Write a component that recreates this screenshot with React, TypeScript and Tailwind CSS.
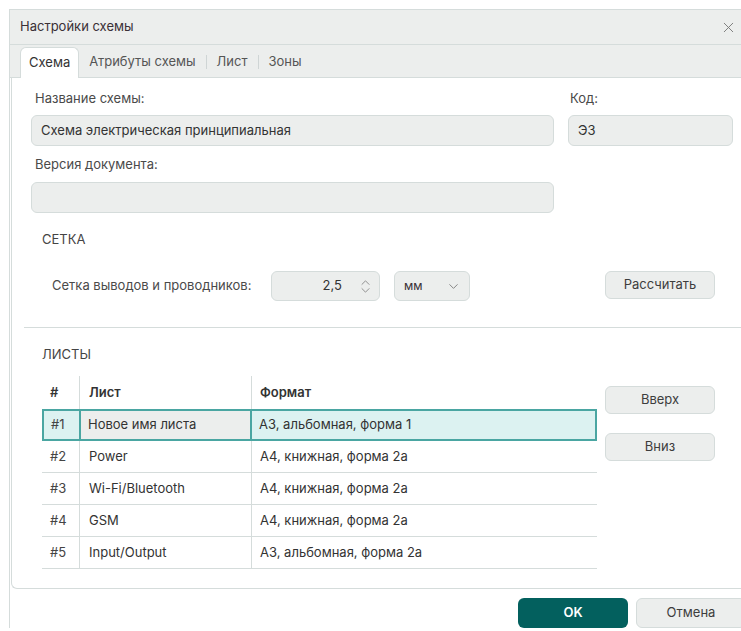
import React from 'react';
import { X, ChevronsUpDown, ChevronDown } from 'lucide-react';

type SheetRow = {
  num: string;
  name: string;
  format: string;
};

const sheets: SheetRow[] = [
  { num: '#1', name: 'Новое имя листа', format: 'А3, альбомная, форма 1' },
  { num: '#2', name: 'Power', format: 'А4, книжная, форма 2а' },
  { num: '#3', name: 'Wi-Fi/Bluetooth', format: 'А4, книжная, форма 2а' },
  { num: '#4', name: 'GSM', format: 'А4, книжная, форма 2а' },
  { num: '#5', name: 'Input/Output', format: 'А3, альбомная, форма 2а' },
];

function GrayButton({ children, className = '' }: { children: React.ReactNode; className?: string }) {
  return (
    <button
      className={`h-[28px] w-[110px] rounded-[6px] border border-[#d5dcdb] bg-[#eceeed] text-[13px] text-[#3d3d3d] ${className}`}
    >
      {children}
    </button>
  );
}

export default function App() {
  return (
    <div className="h-[631px] w-[741px] overflow-hidden bg-white font-['Inter','Noto_Sans',sans-serif] text-[13px] text-[#333]">
      <div className="pl-[9px] pt-[9px]">
        <div className="w-[747px] border-l border-t border-[#d5dcdb] bg-white">
          {/* Title bar */}
          <div className="flex h-[35px] items-center justify-between border-b border-[#d5dcdb] bg-[#eceeed] pl-[10px] pr-[19px]">
            <span className="text-[13px] text-[#3a3036]">Настройки схемы</span>
            <X size={17} strokeWidth={1.3} className="text-[#777]" />
          </div>

          {/* Tabs */}
          <div className="flex h-[33px] items-end border-b border-[#d5dcdb] bg-[#eceeed] pl-[10px]">
            <div className="-mb-px flex h-[31px] items-center rounded-t-[6px] border border-b-0 border-[#d5dcdb] bg-white pl-[8px] pr-[8px] text-[#333]">
              Схема
            </div>
            <div className="flex h-[30px] items-center pl-[10px] text-[#555]">
              <span>Атрибуты схемы</span>
              <span className="mx-[10px] h-[14px] w-px bg-[#cfd5d5]" />
              <span>Лист</span>
              <span className="mx-[10px] h-[14px] w-px bg-[#cfd5d5]" />
              <span>Зоны</span>
            </div>
          </div>

          {/* Tab content */}
          <div className="ml-[1px] rounded-bl-[6px] border-b border-l border-[#d5dcdb] pb-[19px] pt-[12px]">
            <div className="flex pl-[19px]">
              <div className="w-[523px]">
                <div className="h-[16px] pl-[4px] leading-[16px] text-[#4a4a4a]">Название схемы:</div>
                <div className="mt-[9px] flex h-[31px] items-center rounded-[6px] border border-[#d5dcdb] bg-[#eceeed] px-[9px]">
                  Схема электрическая принципиальная
                </div>
              </div>
              <div className="ml-[14px] w-[165px]">
                <div className="h-[16px] pl-[2px] leading-[16px] text-[#4a4a4a]">Код:</div>
                <div className="mt-[9px] flex h-[31px] items-center rounded-[6px] border border-[#d5dcdb] bg-[#eceeed] px-[9px]">
                  ЭЗ
                </div>
              </div>
            </div>

            <div className="mt-[10px] w-[542px] pl-[19px]">
              <div className="h-[16px] pl-[4px] leading-[16px] text-[#4a4a4a]">Версия документа:</div>
              <div className="mt-[10px] h-[31px] rounded-[6px] border border-[#d5dcdb] bg-[#eceeed]" />
            </div>

            {/* Grid section */}
            <div className="mt-[18px] h-[16px] pl-[30px] leading-[16px] text-[#444]">СЕТКА</div>
            <div className="mt-[24px] flex h-[30px] items-center pl-[40px]">
              <span className="w-[219px] text-[#4a4a4a]">Сетка выводов и проводников:</span>
              <div className="flex h-[30px] w-[109px] items-center justify-end rounded-[6px] border border-[#d5dcdb] bg-[#eceeed] pr-[5px]">
                <span className="mr-[15px]">2,5</span>
                <ChevronsUpDown size={17} strokeWidth={1.3} className="text-[#888]" />
              </div>
              <div className="ml-[14px] flex h-[30px] w-[76px] items-center justify-between rounded-[6px] border border-[#d5dcdb] bg-[#eceeed] pl-[9px] pr-[8px]">
                <span className="text-[12px] text-[#3a3036]">мм</span>
                <ChevronDown size={15} strokeWidth={1.4} className="text-[#777]" />
              </div>
              <GrayButton className="ml-[135px] -mt-[2px]">Рассчитать</GrayButton>
            </div>

            <div className="ml-[12px] mt-[26px] border-t border-[#d5dcdb]" />

            {/* Sheets section */}
            <div className="mt-[18px] h-[16px] pl-[30px] leading-[16px] text-[#444]">ЛИСТЫ</div>
            <div className="mt-[14px] flex pl-[30px]">
              <div className="w-[555px]">
                <div className="flex h-[33px] items-center font-semibold text-[#333]">
                  <div className="flex h-full w-[37px] items-center pl-[8px]">#</div>
                  <div className="flex h-full w-[172px] items-center border-l border-[#d5dcdb] pl-[9px]">Лист</div>
                  <div className="flex h-full flex-1 items-center border-l border-[#d5dcdb] pl-[8px]">Формат</div>
                </div>
                {sheets.map((row, i) => {
                  const selected = i === 0;
                  return (
                    <div
                      key={row.num}
                      className={
                        selected
                          ? 'flex h-[32px] border-2 border-[#4aa6a2] bg-[#dcf2f1]'
                          : 'flex h-[32px] border-b border-[#d5dcdb]'
                      }
                    >
                      <div
                        className={`flex items-center text-[#444] ${selected ? 'w-[35px] pl-[7px]' : 'w-[37px] pl-[8px]'}`}
                      >
                        {row.num}
                      </div>
                      <div
                        className={
                          selected
                            ? 'flex w-[173px] items-center border-x-2 border-[#4aa6a2] bg-[#eceeed] pl-[7px]'
                            : 'flex w-[172px] items-center border-l border-[#d5dcdb] pl-[9px]'
                        }
                      >
                        {row.name}
                      </div>
                      <div className={`flex flex-1 items-center ${selected ? 'pl-[7px]' : 'border-l border-[#d5dcdb] pl-[8px]'}`}>
                        {row.format}
                      </div>
                    </div>
                  );
                })}
              </div>
              <div className="ml-[8px] flex flex-col pt-[10px]">
                <GrayButton>Вверх</GrayButton>
                <GrayButton className="mt-[19px]">Вниз</GrayButton>
              </div>
            </div>
          </div>

          {/* Footer buttons */}
          <div className="flex justify-end gap-[8px] pr-[10px] pt-[9px]">
            <button className="h-[30px] w-[110px] rounded-[6px] bg-[#03605e] text-[13px] font-semibold text-white">
              OK
            </button>
            <button className="h-[30px] w-[110px] rounded-[6px] border border-[#d5dcdb] bg-[#eceeed] text-[13px] text-[#3d3d3d]">
              Отмена
            </button>
          </div>
        </div>
      </div>
    </div>
  );
}
